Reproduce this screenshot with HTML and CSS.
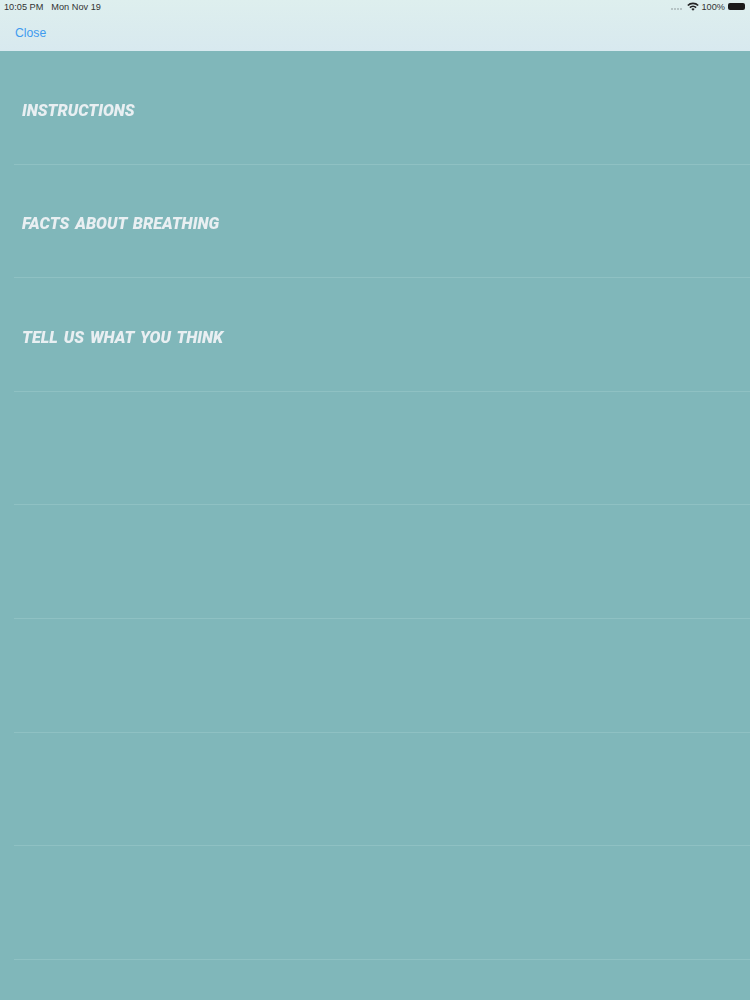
FILE: index.html
```html
<!DOCTYPE html>
<html lang="en">
<head>
    <meta charset="UTF-8">
    <meta name="viewport" content="width=device-width, initial-scale=1.0">
    <title>Menu</title>
    <link rel="stylesheet" href="styles.css">
</head>
<body>

    <div class="navbar">
        <div class="status">
            <div class="status-left">
                <span>10:05 PM</span>
                <span>Mon Nov 19</span>
            </div>
            <div class="status-right">
                <span class="signal">
                    <i></i><i></i><i></i><i></i>
                </span>
                <svg class="wifi" width="12" height="9" viewBox="0 0 12 9">
                    <path d="M0.2 2.9A8.2 8.2 0 0 1 11.8 2.9L10.6 4.1A6.5 6.5 0 0 0 1.4 4.1Z" />
                    <path d="M2.3 5A5.2 5.2 0 0 1 9.7 5L8.5 6.2A3.5 3.5 0 0 0 3.5 6.2Z" />
                    <path d="M4.4 7.1A2.3 2.3 0 0 1 7.6 7.1L6 8.8Z" />
                </svg>
                <span>100%</span>
                <span class="battery"></span>
            </div>
        </div>
        <div class="nav-row">
            <a class="close" href="#">Close</a>
        </div>
    </div>

    <div class="list">
        <div class="row"><span class="row-title">Instructions</span></div>
        <div class="row"><span class="row-title">Facts about breathing</span></div>
        <div class="row"><span class="row-title">Tell us what you think</span></div>
        <div class="row"></div>
        <div class="row"></div>
        <div class="row"></div>
        <div class="row"></div>
        <div class="row"></div>
    </div>

</body>
</html>
```

FILE: styles.css
```css
* {
    margin: 0;
    padding: 0;
    box-sizing: border-box;
}
body {
    font-family: "Liberation Sans", Arial, sans-serif;
    background-color: #80b7ba;
    height: 1000px;
    overflow: hidden;
}
.navbar {
    height: 51px;
    background: linear-gradient(to bottom, #deefee, #d8e9ef);
}
.status {
    display: flex;
    justify-content: space-between;
    align-items: center;
    height: 13px;
    padding: 0 5px 0 4px;
    font-size: 9.2px;
    color: #333;
}
.status-left {
    display: flex;
    gap: 8px;
}
.status-right {
    display: flex;
    align-items: center;
    gap: 3px;
}
.signal {
    display: flex;
    gap: 1px;
    margin-right: 2px;
    padding-top: 4px;
}
.signal i {
    width: 2px;
    height: 2px;
    border-radius: 50%;
    background-color: #a9b6b7;
}
.wifi {
    fill: #222;
}
.battery {
    width: 17px;
    height: 7px;
    border-radius: 2px;
    background-color: #1a1a1a;
}
.nav-row {
    padding: 13px 15px 0;
}
.close {
    display: block;
    font-size: 12.2px;
    line-height: 14px;
    color: #3f9bef;
    text-decoration: none;
}
.row {
    height: 113.6px;
    margin-left: 14px;
    padding: 49.5px 0 0 8px;
    border-bottom: 1px solid #8fc1c3;
}
.row-title {
    display: block;
    font-family: Roboto, "Liberation Sans", sans-serif;
    font-size: 16.2px;
    line-height: 20px;
    font-weight: 900;
    font-style: italic;
    text-transform: uppercase;
    word-spacing: 2px;
    color: #e9eff2;
    filter: blur(0.4px);
}
```
